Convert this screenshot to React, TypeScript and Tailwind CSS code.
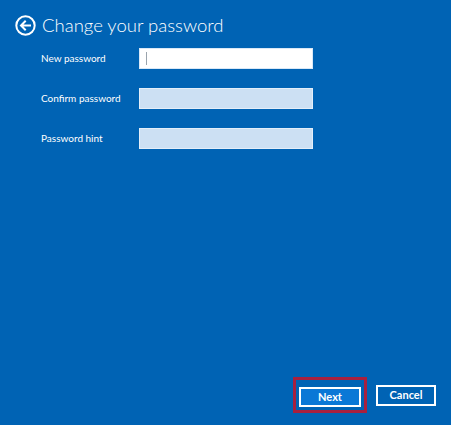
export default function App() {
  const label = "w-[98px] shrink-0 text-[10px] text-white";
  const box =
    "h-[21px] w-[174px] border border-[#e3eef9] bg-[#cce0f3] outline-none";

  return (
    <div
      className="relative flex h-[425px] w-[451px] flex-col bg-[#0063b4] text-white"
      style={{ fontFamily: 'Lato, "Open Sans", sans-serif' }}
    >
      <header className="flex items-center gap-[6px] pl-[15px] pt-[15px]">
        <svg width="21" height="21" viewBox="0 0 21 21" fill="none">
          <circle cx="10.5" cy="10.5" r="9.2" stroke="white" strokeWidth="2" />
          <path
            d="M15 10.5H6.5M10 6.5 6 10.5l4 4"
            stroke="white"
            strokeWidth="2"
            strokeLinecap="square"
          />
        </svg>
        <h1 className="text-[18.5px] leading-none font-light">
          Change your password
        </h1>
      </header>

      <div className="flex flex-col gap-[19px] pl-[41px] pt-[12px]">
        <div className="flex items-center">
          <span className={label}>New password</span>
          <div className="relative h-[21px] w-[174px] border border-[#d9e8f7] bg-white">
            <span className="absolute top-[3px] left-[6px] h-[13px] w-px bg-[#9aa4ad]" />
          </div>
        </div>
        <div className="flex items-center">
          <span className={label}>Confirm password</span>
          <div className={box} />
        </div>
        <div className="flex items-center">
          <span className={label}>Password hint</span>
          <div className={box} />
        </div>
      </div>

      <footer className="mt-auto flex items-center justify-end gap-[9px] pr-[15px] pb-[12px]">
        <div className="border-[3px] border-[#a7203f] p-[3px]">
          <button className="h-[20px] w-[62px] border-2 border-white bg-[#0a78d6] text-[11px] font-bold text-white">
            Next
          </button>
        </div>
        <button className="h-[21px] w-[60px] border-2 border-white bg-[#0063b4] text-[11px] font-bold text-white">
          Cancel
        </button>
      </footer>
    </div>
  );
}
